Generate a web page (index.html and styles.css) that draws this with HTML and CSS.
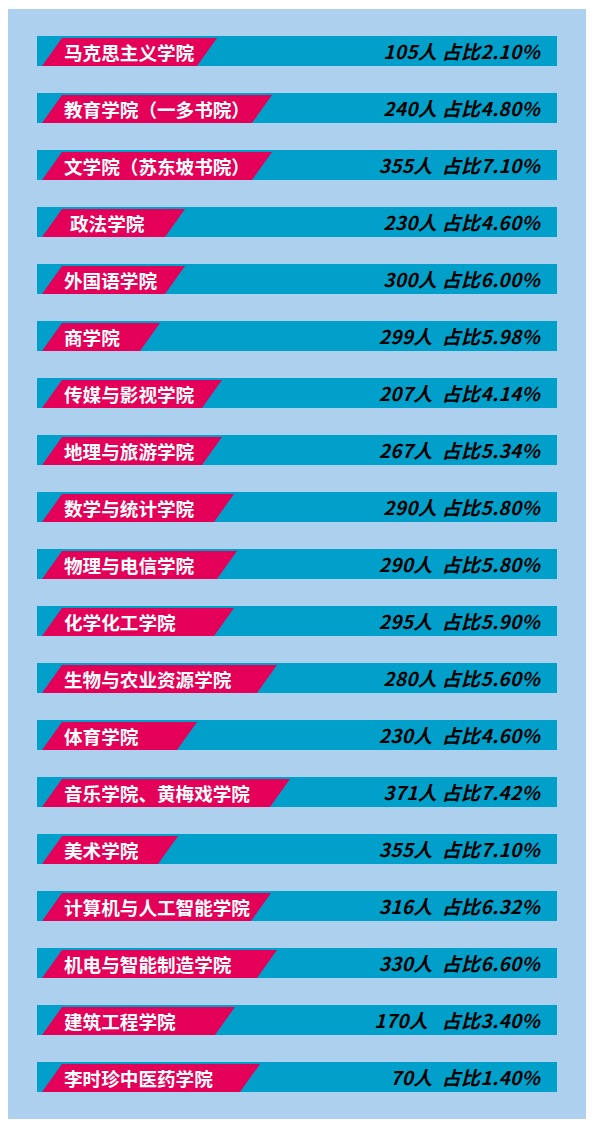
FILE: index.html
```html
<!DOCTYPE html>
<html lang="zh-CN">
<head>
    <meta charset="UTF-8">
    <meta name="viewport" content="width=device-width, initial-scale=1.0">
    <title>各学院人数占比</title>
    <link rel="stylesheet" href="styles.css">
</head>
<body>
    <div class="panel">
        <div class="row"><span class="college" style="width: 175px">马克思主义学院</span><span class="stat">105人 占比2.10%</span></div>
        <div class="row"><span class="college" style="width: 230px">教育学院（一多书院）</span><span class="stat">240人 占比4.80%</span></div>
        <div class="row"><span class="college" style="width: 230px">文学院（苏东坡书院）</span><span class="stat">355人&nbsp; 占比7.10%</span></div>
        <div class="row"><span class="college indent" style="width: 143px">政法学院</span><span class="stat">230人 占比4.60%</span></div>
        <div class="row"><span class="college" style="width: 143px">外国语学院</span><span class="stat">300人 占比6.00%</span></div>
        <div class="row"><span class="college" style="width: 118px">商学院</span><span class="stat">299人&nbsp; 占比5.98%</span></div>
        <div class="row"><span class="college" style="width: 180px">传媒与影视学院</span><span class="stat">207人&nbsp; 占比4.14%</span></div>
        <div class="row"><span class="college" style="width: 180px">地理与旅游学院</span><span class="stat">267人&nbsp; 占比5.34%</span></div>
        <div class="row"><span class="college" style="width: 192px">数学与统计学院</span><span class="stat">290人 占比5.80%</span></div>
        <div class="row"><span class="college" style="width: 195px">物理与电信学院</span><span class="stat">290人&nbsp; 占比5.80%</span></div>
        <div class="row"><span class="college" style="width: 192px">化学化工学院</span><span class="stat">295人&nbsp; 占比5.90%</span></div>
        <div class="row"><span class="college" style="width: 235px">生物与农业资源学院</span><span class="stat">280人 占比5.60%</span></div>
        <div class="row"><span class="college" style="width: 155px">体育学院</span><span class="stat">230人&nbsp; 占比4.60%</span></div>
        <div class="row"><span class="college" style="width: 248px">音乐学院、黄梅戏学院</span><span class="stat">371人 占比7.42%</span></div>
        <div class="row"><span class="college" style="width: 136px">美术学院</span><span class="stat">355人&nbsp; 占比7.10%</span></div>
        <div class="row"><span class="college" style="width: 229px">计算机与人工智能学院</span><span class="stat">316人&nbsp; 占比6.32%</span></div>
        <div class="row"><span class="college" style="width: 235px">机电与智能制造学院</span><span class="stat">330人&nbsp; 占比6.60%</span></div>
        <div class="row"><span class="college" style="width: 193px">建筑工程学院</span><span class="stat">170人&nbsp;&nbsp; 占比3.40%</span></div>
        <div class="row"><span class="college" style="width: 218px">李时珍中医药学院</span><span class="stat">70人&nbsp; 占比1.40%</span></div>
    </div>
</body>
</html>
```

FILE: styles.css
```css
body {
    margin: 0;
    background-color: #ffffff;
    font-family: "Noto Sans CJK SC", "Noto Sans", sans-serif;
}
.panel {
    margin: 9px 0 0 8px;
    width: 578px;
    box-sizing: border-box;
    padding: 27px 29px;
    background-color: #add0ee;
    display: flex;
    flex-direction: column;
    gap: 27px;
}
.row {
    display: flex;
    justify-content: space-between;
    align-items: flex-end;
    height: 30px;
    padding: 0 17px 0 5px;
    background-color: #00a0cb;
}
.college {
    box-sizing: border-box;
    height: 28px;
    line-height: 27px;
    padding-left: 22px;
    background-color: #e40058;
    clip-path: polygon(20px 0, 100% 0, calc(100% - 20px) 100%, 0 100%);
    color: #ffffff;
    font-size: 18.6px;
    font-weight: 700;
    white-space: nowrap;
}
.college.indent {
    padding-left: 28px;
}
.stat {
    align-self: center;
    line-height: 30px;
    color: #000000;
    font-size: 19px;
    font-weight: 700;
    font-style: italic;
    letter-spacing: 0.3px;
    white-space: pre;
}
```
